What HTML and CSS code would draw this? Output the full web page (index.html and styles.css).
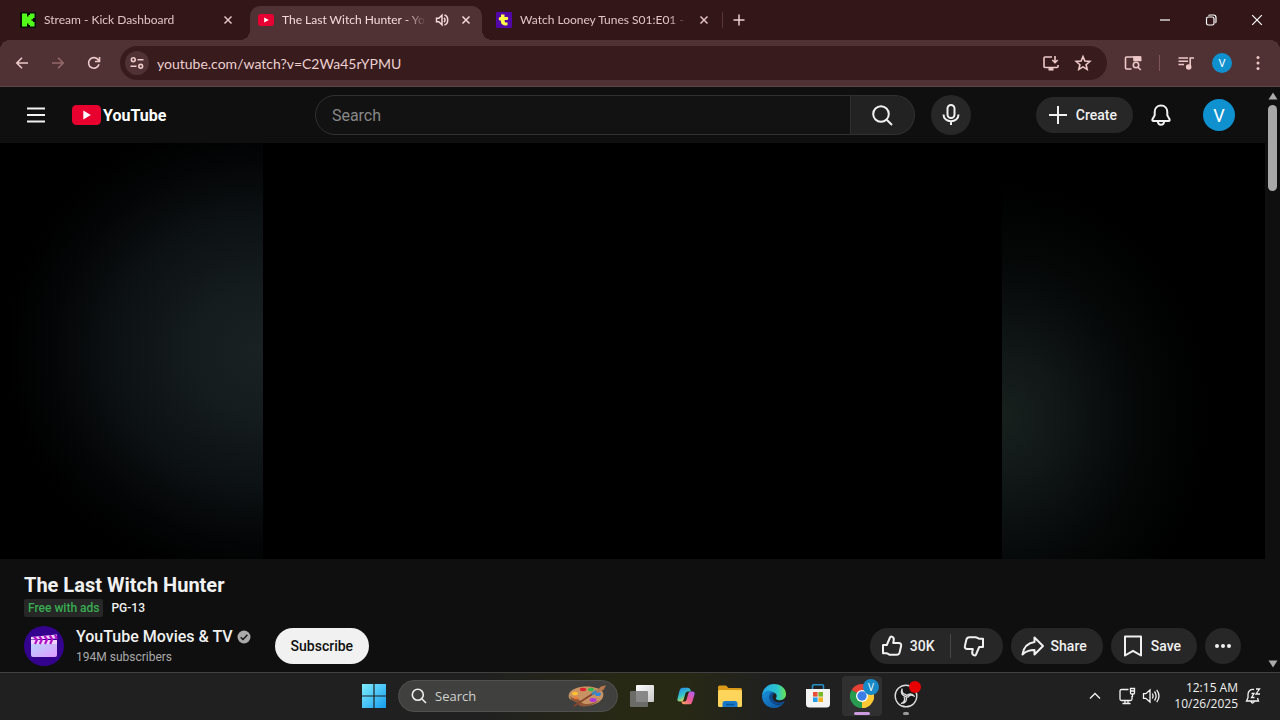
FILE: index.html
```html
<!DOCTYPE html>
<html lang="en">
<head>
<meta charset="utf-8">
<meta name="viewport" content="width=device-width, initial-scale=1">
<title>The Last Witch Hunter - YouTube</title>
<link rel="stylesheet" href="styles.css">
</head>
<body>
<header class="tabstrip">
  <div class="tab">
    <svg class="favicon" viewBox="0 0 16 16"><rect width="16" height="16" fill="#0a0d0a"/><path d="M2 1.500h5v3h1.500V3H10V1.500h4.500v4.500H13v1.200h-1.500v1.600H13V10h1.500v4.500H10V13H8.500v-1.500H7v3H2z" fill="#53fc18"/></svg>
    <span class="tab-title">Stream - Kick Dashboard</span>
    <button class="tab-close" aria-label="Close tab"><svg viewBox="0 0 16 16"><path d="M4.500 4.500l7 7M11.500 4.500l-7 7"/></svg></button>
  </div>
  <div class="tab active">
    <svg class="favicon" viewBox="0 0 16 16"><rect y="2" width="16" height="12" rx="3" fill="#e80033"/><path d="M6.200 5.400v5.200L10.800 8z" fill="#fff"/></svg>
    <span class="tab-title">The Last Witch Hunter - YouTube</span>
    <button class="tab-close" aria-label="Mute tab"><svg viewBox="0 0 16 16"><path d="M2.500 6.200h2.300L8 3.200v9.600L4.800 9.800H2.500zM10 5.800c1.400 1 1.400 3.400 0 4.400M10.500 3c4.300 1.500 4.300 8.500 0 10"/></svg></button>
    <button class="tab-close" aria-label="Close tab"><svg viewBox="0 0 16 16"><path d="M4.500 4.500l7 7M11.500 4.500l-7 7"/></svg></button>
  </div>
  <div class="tab">
    <svg class="favicon" viewBox="0 0 16 16"><rect width="16" height="16" rx="1" fill="#5206a8"/><path d="M5 2.500h3.500V5h1.700a1.500 1.500 0 1 1 1 2.900H8.700v1.500c0 1 1.500 1.300 2.800.8v2.700c-3.300 1.300-6.600.1-6.600-3.300V8.500a1.800 1.800 0 1 1 .1-3.500z" fill="#ffff45"/></svg>
    <span class="tab-title">Watch Looney Tunes S01:E01 - Tubi</span>
    <button class="tab-close" aria-label="Close tab"><svg viewBox="0 0 16 16"><path d="M4.500 4.500l7 7M11.500 4.500l-7 7"/></svg></button>
  </div>
  <span class="tab-divider"></span>
  <button class="new-tab" aria-label="New tab"><svg viewBox="0 0 16 16"><path d="M8 2.500v11M2.500 8h11"/></svg></button>
  <div class="window-controls">
    <button aria-label="Minimize"><svg viewBox="0 0 16 16"><path d="M3 8h10"/></svg></button>
    <button aria-label="Restore"><svg viewBox="0 0 16 16"><rect x="3.500" y="5" width="7.500" height="8" rx="1.800"/><path d="M5.500 3.500Q6 3 7 3h3.500Q13 3 13 5.500V9.500Q13 10.500 12.500 11"/></svg></button>
    <button aria-label="Close window"><svg viewBox="0 0 16 16"><path d="M3.200 3.200l9.600 9.600M12.800 3.200l-9.600 9.600"/></svg></button>
  </div>
</header>

<nav class="toolbar">
  <button class="tool" aria-label="Back"><svg viewBox="0 0 16 16"><path d="M14 8H3M8 2.800L2.800 8 8 13.200"/></svg></button>
  <button class="tool dim" aria-label="Forward"><svg viewBox="0 0 16 16"><path d="M2 8h11M8 2.800L13.200 8 8 13.200"/></svg></button>
  <button class="tool" aria-label="Reload"><svg viewBox="0 0 16 16"><path d="M13 9.300A5.300 5.300 0 1 1 12.300 5L13.500 6.300M13.500 2v4.500H9"/></svg></button>
  <div class="omnibox">
    <button class="site-info" aria-label="Site information"><svg viewBox="0 0 16 16"><circle cx="4.300" cy="4.700" r="1.900"/><path d="M8.500 4.700h6M1.500 11.300h6"/><circle cx="11.700" cy="11.300" r="1.900"/></svg></button>
    <input class="url" type="text" aria-label="Address" value="youtube.com/watch?v=C2Wa45rYPMU">
    <button class="omni-action" aria-label="Install app"><svg viewBox="0 0 18 18"><path d="M10 3H3q-1 0-1 1v8.500q0 1 1 1h12q1 0 1-1V11M13 2v6.500M10.300 6L13 8.700 15.700 6"/><path d="M6.500 15.300h5" class="thick"/></svg></button>
    <button class="omni-action" aria-label="Bookmark"><svg viewBox="0 0 18 18"><path d="M9 2.600l1.900 4.500 4.900.4-3.700 3.200 1.100 4.700L9 12.900l-4.200 2.500 1.100-4.700-3.700-3.200 4.900-.4z"/></svg></button>
  </div>
  <button class="tool" aria-label="Search tabs"><svg viewBox="0 0 18 18"><path d="M7.500 15H2.500q-1 0-1-1V4q0-1 1-1H15.500q1 0 1 1v3"/><path d="M10 3h6.500v3.500H10z" class="solid"/><circle cx="12" cy="11" r="2.700"/><path d="M14 13.200l2.700 2.800"/></svg></button>
  <span class="tool-divider"></span>
  <button class="tool media" aria-label="Media controls"><svg viewBox="0 0 18 18"><path d="M1.500 4h9.500M1.500 7.300h9.500M1.500 10.500h5.500M13.200 13V4h3.800"/><circle cx="11.700" cy="13" r="2" class="solid"/></svg></button>
  <button class="tool" aria-label="Profile"><span class="avatar small">V</span></button>
  <button class="tool" aria-label="Menu"><svg viewBox="0 0 16 16"><g class="dots"><circle cx="8" cy="2.500" r="1.500"/><circle cx="8" cy="8" r="1.500"/><circle cx="8" cy="13.500" r="1.500"/></g></svg></button>
</nav>

<div class="viewport">
  <main class="page">
    <div class="masthead">
      <div class="brand">
        <button class="guide" aria-label="Guide"><svg viewBox="0 0 24 24"><path d="M3 5.500h18M3 12h18M3 18.500h18"/></svg></button>
        <a class="logo" href="#"><svg viewBox="0 0 29 20"><rect width="29" height="20" rx="4.500" fill="#e8002e"/><path d="M11.300 5.500v9L18.800 10z" fill="#fff"/></svg><span>YouTube</span></a>
      </div>
      <form class="search" role="search">
        <input type="text" placeholder="Search" aria-label="Search">
        <button type="button" class="search-go" aria-label="Search"><svg viewBox="0 0 24 24"><circle cx="11" cy="11" r="7.800"/><path d="M16.700 16.700L22 22"/></svg></button>
        <button type="button" class="mic" aria-label="Search with your voice"><svg viewBox="0 0 24 24"><rect x="8.500" y="2" width="7" height="13" rx="3.500"/><path d="M4.500 11.500c0 9 15 9 15 0M12 18.500V22"/></svg></button>
      </form>
      <div class="account">
        <button class="pill create"><svg viewBox="0 0 24 24"><path d="M12 3v18M3 12h18"/></svg>Create</button>
        <button class="bell" aria-label="Notifications"><svg viewBox="0 0 24 24"><path d="M12 2.500c-3.800 0-6.300 2.700-6.300 6.500v3.300L3.500 16.200q-.7 1.600 1 1.800h15q1.700-.2 1-1.800l-2.200-3.900V9c0-3.800-2.500-6.500-6.300-6.500z"/><path d="M8.800 18.500c.5 4.400 5.900 4.400 6.400 0"/></svg></button>
        <button class="avatar large" aria-label="Account">V</button>
      </div>
    </div>

    <section class="player" aria-label="Video player">
      <div class="ambient left"></div>
      <div class="video"></div>
      <div class="ambient right"></div>
    </section>

    <section class="details">
      <h1>The Last Witch Hunter</h1>
      <div class="badges"><span class="free">Free with ads</span><span class="rating">PG-13</span></div>
      <div class="owner-row">
        <svg class="channel-icon" viewBox="0 0 40 40"><defs><linearGradient id="slate" x2="1" y2="1"><stop stop-color="#b8d4ff"/><stop offset="1" stop-color="#df9aff"/></linearGradient></defs><circle cx="20" cy="20" r="20" fill="#34038e"/><path d="M7 17h26v12q0 2-2 2H9q-2 0-2-2z" fill="url(#slate)"/><path d="M7 11l26-2.500v4L7 13.500zM7 14h26v4H7z" fill="#f0d2ff"/><path d="M10 10.700l3 3-2 4.300M15.300 10.300l2.500 3.400-2 4.300M20.500 9.800l2.500 3.700-2 4.500M25.700 9.300l2.500 4-2 4.700M31 9l2 4" fill="none" stroke="#b00fc5" stroke-width="2.200"/></svg>
        <div class="channel">
          <a href="#" class="channel-name">YouTube Movies &amp; TV<svg viewBox="0 0 14 14"><circle cx="7" cy="7" r="6.500" fill="#aaa"/><path d="M3.700 7.200l2.300 2.300 4.400-4.800" fill="none" stroke="#0f0f0f" stroke-width="1.300"/></svg></a>
          <span class="subs">194M subscribers</span>
        </div>
        <button class="subscribe">Subscribe</button>
        <div class="actions">
          <div class="segmented">
            <button class="like"><svg viewBox="0 0 24 24"><path d="M3 11h3.800L10 3.500q.6-1.300 1.800-.9c1.700.6 2.300 2.100 1.900 3.900L13.200 9h5.500c1.900 0 2.900 1.300 2.400 3l-1.500 6.500c-.4 1.500-1.400 2.300-3 2.300H10.500c-1.600 0-2.400-1.500-4-1.500H3z"/></svg>30K</button>
            <button class="dislike" aria-label="Dislike"><svg viewBox="0 0 24 24"><path d="M21 13h-3.800L14 20.500q-.6 1.300-1.800.9c-1.700-.6-2.300-2.100-1.900-3.900l.5-2.500H5.300c-1.900 0-2.900-1.300-2.400-3l1.500-6.500c.4-1.500 1.400-2.300 3-2.300h6.100c1.600 0 2.400 1.500 4 1.500H21z"/></svg></button>
          </div>
          <button class="pill"><svg viewBox="0 0 24 24"><path d="M13.500 3.500L22 12l-8.500 8.500V16c-5 0-8.500 1-12 4.500C2.500 13.500 6.500 9 13.500 8z"/></svg>Share</button>
          <button class="pill"><svg viewBox="0 0 24 24"><path d="M4 2.500h16v19l-8-4.700-8 4.700z"/></svg>Save</button>
          <button class="more" aria-label="More actions"><svg viewBox="0 0 24 24"><g class="dots"><circle cx="6" cy="12" r="2"/><circle cx="12" cy="12" r="2"/><circle cx="18" cy="12" r="2"/></g></svg></button>
        </div>
      </div>
    </section>
  </main>
  <div class="scrollbar" aria-hidden="true">
    <svg viewBox="0 0 10 8"><path d="M5 .5L9.500 7.500H.5z"/></svg>
    <div class="thumb"></div>
    <svg viewBox="0 0 10 8"><path d="M5 7.500L.5.500h9z"/></svg>
  </div>
</div>

<footer class="taskbar">
  <div class="apps">
    <button class="app" aria-label="Start"><svg viewBox="0 0 24 24"><defs><linearGradient id="win" x2="1" y2="1" gradientUnits="userSpaceOnUse" gradientTransform="scale(24)"><stop stop-color="#80edff"/><stop offset="1" stop-color="#159cec"/></linearGradient></defs><path d="M0 0h11.400v11.400H0zM12.600 0H24v11.400H12.600zM0 12.600h11.400V24H0zM12.600 12.600H24V24H12.600z" fill="url(#win)"/></svg></button>
    <label class="task-search">
      <svg class="lens" viewBox="0 0 16 16"><circle cx="6.800" cy="6.800" r="5.500"/><path d="M11 11l4 4"/></svg>
      <input type="text" placeholder="Search">
      <svg class="palette" viewBox="0 0 40 22"><path d="M2 9C5 0 28-1 35 6c4 5-1 12-10 14-6 1.500-12 .7-13-2-.6-2-2-3-5-2.800C2 15 1 12 2 9z" fill="#c99263"/><path d="M3 11c3 4 9 1 11 6 2 3 12 3 18-2-5 6-18 9-21 4-1-3-7-1-8-8z" fill="#8d5738"/><ellipse cx="8" cy="8.500" rx="3" ry="1.800" fill="#ffc22e"/><ellipse cx="16" cy="4.500" rx="3.200" ry="1.700" fill="#dc2430"/><ellipse cx="24" cy="4.500" rx="3" ry="1.800" fill="#35b84d"/><ellipse cx="31" cy="9" rx="3" ry="2" fill="#3087e0"/><ellipse cx="26" cy="15" rx="3.500" ry="1.900" fill="#b235d5"/><ellipse cx="9" cy="13" rx="2.500" ry="1.200" fill="#ee7b32"/><path d="M7 21L27 8" stroke="#85472d" stroke-width="2"/><path d="M25 9l5-3" stroke="#4385b7" stroke-width="3"/><path d="M29 6.500L34 1.500l5-1.300-2.500 4.500-6 3.500z" fill="#b87850"/></svg>
    </label>
    <button class="app" aria-label="Task view"><svg viewBox="0 0 24 24"><defs><linearGradient id="pane" x2="1" y2="1"><stop stop-color="#fff"/><stop offset="1" stop-color="#c7c7c7"/></linearGradient></defs><rect x="6" y="1" width="18" height="17" rx="1" fill="url(#pane)"/><rect y="7" width="18" height="16" rx="1" fill="#777" opacity=".85"/></svg></button>
    <button class="app copilot" aria-label="Copilot"><svg viewBox="0 0 24 24"><defs><linearGradient id="cpa" x2=".5" y2="1"><stop stop-color="#2386ed"/><stop offset=".6" stop-color="#35c6c7"/><stop offset="1" stop-color="#f4d839"/></linearGradient><linearGradient id="cpb" x1="1" x2="0" y2="1"><stop stop-color="#a65eff"/><stop offset=".5" stop-color="#ed5695"/><stop offset="1" stop-color="#ffad58"/></linearGradient></defs><path d="M8 3h6q2 0 2.700 2l.8 2H14q-2 0-2.600 2l-2 7q-.6 2-2.600 2H5q-3 0-2.300-3L5 6q.8-3 3-3z" fill="url(#cpa)"/><path d="M16 21h-6q-2 0-2.700-2l-.5-1H10q2 0 2.600-2l2-7q.6-2 2.600-2H19q3 0 2.300 3L19 18q-.8 3-3 3z" fill="url(#cpb)"/></svg></button>
    <button class="app" aria-label="File Explorer"><svg viewBox="0 0 24 24"><path d="M0 3q0-1.500 1.500-1.500H8L10.500 4H22.500Q24 4 24 5.500V12H0z" fill="#d99a17"/><rect y="6" width="24" height="17" rx="1.500" fill="#ffd45a"/><path d="M4.500 23v-3.500Q4.500 17 7 17h10q2.500 0 2.500 2.500V23z" fill="#1978ca"/><path d="M8 20.500h8" stroke="#07579b" stroke-width="1.500"/></svg></button>
    <button class="app" aria-label="Edge"><svg viewBox="0 0 24 24"><defs><linearGradient id="ea" x2="1"><stop stop-color="#22a5e5"/><stop offset=".65" stop-color="#2cc7cc"/><stop offset="1" stop-color="#6be34c"/></linearGradient><linearGradient id="eb" x2="1" y2="1"><stop stop-color="#1890da"/><stop offset="1" stop-color="#0d529d"/></linearGradient></defs><path d="M0 11.500C.7 4.500 5.700 0 12 0c7 0 12 4.500 12 10 0 4-2.800 6.200-6 6.200-3.500 0-4.500-1.300-3.800-2.500 1.200-2 .3-4.700-3.200-5.500C6.500 7.200 2.500 9 0 11.500z" fill="url(#ea)"/><path d="M0 12c1.500-5 7-6.500 11-3.800C6.500 9.500 6.200 17 12.500 20c4 1.800 7.200.7 9.500-1.500-2 3.500-5.500 5.500-10 5.500C5 24 0 18.500 0 12z" fill="url(#eb)"/><path d="M11 8.200c-5 1.500-5.500 8.300.8 11.500 4 2 8.500 1.200 10.900-1.500-.2-.7-.7-1-1.700-.5-5.500 2-10.500-.5-10.500-5 0-1.800 1.300-2.700 2.500-3.500z" fill="#0c4d91"/></svg></button>
    <button class="app" aria-label="Microsoft Store"><svg viewBox="0 0 24 24"><path d="M6.500 5V2Q6.500.8 8 .8h8q1.500 0 1.500 1.200v3" fill="none" stroke="#2690c8" stroke-width="1.600"/><path d="M0 5h24v15q0 3.500-3.500 3.500h-17Q0 23.500 0 20z" fill="#f3f3f3"/><path d="M7 8h4.600v4.600H7z" fill="#e64f38"/><path d="M12.400 8H17v4.600h-4.600z" fill="#78b824"/><path d="M7 13.400h4.600V18H7z" fill="#249ee8"/><path d="M12.400 13.400H17V18h-4.600z" fill="#f4ae21"/></svg></button>
    <button class="app running current" aria-label="Chrome"><svg viewBox="0 0 24 24"><path d="M12 12L1.600 6A12 12 0 0 1 22.400 6z" fill="#e64134"/><path d="M12 12L22.400 6A12 12 0 0 1 12 24z" fill="#fcc934"/><path d="M12 12v12A12 12 0 0 1 1.600 6z" fill="#279c51"/><path d="M12 6h10.400a12 12 0 0 1-10.400 18l5.200-9z" fill="#fcc934"/><circle cx="12" cy="12" r="6" fill="#fff"/><circle cx="12" cy="12" r="4.700" fill="#3c7ee8"/></svg><span class="app-badge">V</span></button>
    <button class="app running" aria-label="OBS Studio"><svg viewBox="0 0 24 24"><circle cx="12" cy="12" r="10.800" fill="#171718" stroke="#ddd" stroke-width="1.400"/><path d="M12 12.500C8 12 6.500 8.500 8 5c-.2 4 1 5.200 4.500 5.700M12 12.500c2.400-3.300 6.200-3.300 8.400-.2-3.400-2-5.400-1.300-7 1.500M12 12.500c1.600 3.700-.6 6.800-4.500 6.900 3.500-1.800 4-3.600 2.500-6.700" fill="#171718" stroke="#ddd" stroke-width="1.300" stroke-linejoin="round"/></svg><span class="app-badge recording"></span></button>
  </div>
  <div class="tray">
    <button aria-label="Show hidden icons"><svg viewBox="0 0 18 18"><path d="M4 11.500l5-5 5 5"/></svg></button>
    <button class="quick" aria-label="Network and sound"><svg viewBox="0 0 18 18"><path d="M10.500 2.500H3.500q-1.500 0-1.500 1.500v8q0 1.500 1.500 1.500h9q1.500 0 1.500-1.500V9M4.500 16.500h8M7 13.500v3M10 13.500v3"/><path d="M12.500 1.500h4v4.500q0 1-1 1h-2q-1 0-1-1zM13 4h3M14.500 7v3"/></svg><svg viewBox="0 0 18 18"><path d="M1.500 6.700h2.300L8 3v12l-4.200-3.700H1.500zM10.300 6.500q1.500 2.500 0 5M12.500 4.500q3.300 4.500 0 9M14.700 2.800q4.600 6.200 0 12.400"/></svg></button>
    <button class="clock"><span>12:15 AM</span><span>10/26/2025</span></button>
    <button aria-label="Notifications"><svg viewBox="0 0 18 18"><path d="M10 2.500C6 2 4 4.500 4 7.500v3L2.500 14h12L13.500 11M7 14.500q1.500 3 3.500 0M7.500 6.500H10l-2.500 4h3M12 2h3.500L12 7h4"/></svg></button>
  </div>
</footer>
</body>
</html>
```
FILE: styles.css
```css
* {
  box-sizing: border-box;
}

body {
  margin: 0;
  height: 100vh;
  display: flex;
  flex-direction: column;
  overflow: hidden;
  background: #0f0f0f;
  color: #f1f1f1;
  font-family: Roboto, "Liberation Sans", sans-serif;
}

button,
input {
  margin: 0;
  padding: 0;
  border: 0;
  background: none;
  color: inherit;
  font: inherit;
  min-width: 0;
}

button {
  display: flex;
  align-items: center;
  justify-content: center;
  flex: none;
  white-space: nowrap;
}

a {
  color: inherit;
  text-decoration: none;
}

svg {
  display: block;
  flex: none;
  fill: none;
}

/* Tab strip */
.tabstrip {
  flex: none;
  height: 40px;
  padding-left: 12px;
  display: flex;
  align-items: center;
  background: #321618;
  color: #e3c3c3;
  font-size: 12px;
}

.tabstrip svg {
  width: 16px;
  height: 16px;
}

.tabstrip button svg {
  stroke: currentColor;
  stroke-width: 1.5;
}

.tab {
  flex: 0 1 232px;
  min-width: 0;
  height: 34px;
  margin: 6px 6px 0 0;
  padding: 0 8px 6px;
  display: flex;
  align-items: center;
  gap: 8px;
}

.tab.active {
  position: relative;
  border-radius: 10px 10px 0 0;
  background: #503234;
  color: #f5dada;
}

.tab.active::before,
.tab.active::after {
  content: "";
  position: absolute;
  bottom: 0;
  width: 10px;
  height: 10px;
}

.tab.active::before {
  right: 100%;
  background: radial-gradient(circle at 0 0, transparent 10px, #503234 10px);
}

.tab.active::after {
  left: 100%;
  background: radial-gradient(circle at 100% 0, transparent 10px, #503234 10px);
}

.tab-title {
  flex: 1;
  min-width: 0;
  overflow: hidden;
  white-space: nowrap;
  font-family: Lato, "Open Sans", sans-serif;
  font-size: 12px;
  line-height: 18px;
  mask-image: linear-gradient(to left, transparent, #000 20px);
}

.tab-divider {
  width: 1px;
  height: 16px;
  margin: 0 8px 0 -4px;
  background: #5c3537;
}

.new-tab {
  color: #f0d0d0;
}

.window-controls {
  display: flex;
  margin-left: auto;
  color: #fff;
}

.window-controls button {
  width: 46px;
  height: 40px;
}

.window-controls button svg {
  stroke-width: 1.2;
}

/* Browser toolbar */
.toolbar {
  flex: none;
  height: 47px;
  padding: 0 4px;
  display: flex;
  align-items: center;
  border-bottom: 1px solid #5b4546;
  background: linear-gradient(#503234, #503234) 0 10px no-repeat, radial-gradient(circle at 10px 10px, #503234 10px, #321618 10px) 0 0 / 10px 10px no-repeat, radial-gradient(circle at 0 10px, #503234 10px, #321618 10px) 100% 0 / 10px 10px no-repeat, #503234;
  color: #edc9c9;
}

.tool {
  width: 36px;
  height: 36px;
}

.tool svg,
.omnibox svg {
  width: 16px;
  height: 16px;
  stroke: currentColor;
  stroke-width: 1.6;
}

.tool.dim {
  color: #94696b;
}

.toolbar .omni-action svg,
.omnibox + .tool svg,
.tool.media svg {
  width: 18px;
  height: 18px;
}

.toolbar .thick {
  stroke-width: 2.5;
}

.toolbar .solid {
  fill: currentColor;
}

.dots {
  fill: currentColor;
  stroke: none;
}

.omnibox {
  flex: 1;
  min-width: 0;
  height: 34px;
  margin: 0 8px;
  padding: 0 8px 0 5px;
  display: flex;
  align-items: center;
  border-radius: 17px;
  background: #381b1d;
}

.site-info {
  width: 24px;
  height: 24px;
  border-radius: 50%;
  background: #503234;
}

.url {
  flex: 1;
  margin-left: 8px;
  color: #ecd0d0;
  font-family: Lato, "Open Sans", sans-serif;
  font-size: 14px;
}

.omni-action {
  width: 32px;
  height: 32px;
}

.tool-divider {
  width: 1px;
  height: 16px;
  margin: 0 8px;
  background: #7b5759;
}

.avatar {
  display: flex;
  align-items: center;
  justify-content: center;
  border-radius: 50%;
  background: #0f90cf;
  color: #fff;
}

.avatar.small {
  width: 20px;
  height: 20px;
  font-size: 11px;
}

.avatar.large {
  width: 32px;
  height: 32px;
  font-size: 18px;
}

/* Page */
.viewport {
  flex: 1;
  min-height: 0;
  display: flex;
}

.page {
  flex: 1;
  min-width: 0;
  display: flex;
  flex-direction: column;
}

.page button svg {
  width: 24px;
  height: 24px;
  stroke: currentColor;
  stroke-width: 2;
  stroke-linejoin: round;
}

.masthead {
  flex: none;
  height: 56px;
  padding: 0 30px 0 16px;
  display: flex;
  align-items: center;
  justify-content: space-between;
}

.brand {
  width: 234px;
  display: flex;
  align-items: center;
}

.guide {
  width: 40px;
  height: 40px;
}

.logo {
  margin-left: 16px;
  display: flex;
  align-items: center;
  gap: 2px;
  color: #fff;
  font-size: 16px;
  font-weight: 700;
}

.logo svg {
  width: 29px;
  height: 20px;
}

.search {
  flex: 0 1 656px;
  min-width: 0;
  display: flex;
}

.search input {
  flex: 1;
  height: 40px;
  padding: 0 16px;
  border: 1px solid #303030;
  border-radius: 20px 0 0 20px;
  background: #121212;
  font-size: 16px;
}

.search input::placeholder {
  color: #888;
}

.search-go {
  width: 64px;
  height: 40px;
  border: 1px solid #303030;
  border-left: 0;
  border-radius: 0 20px 20px 0;
  background: #222;
}

.mic {
  width: 40px;
  height: 40px;
  margin-left: 16px;
  border-radius: 50%;
  background: #272727;
}

.account {
  display: flex;
  align-items: center;
}

.pill {
  height: 36px;
  padding: 0 16px 0 10px;
  gap: 6px;
  border-radius: 18px;
  background: #272727;
  font-size: 14px;
  font-weight: 500;
}

.bell {
  width: 40px;
  height: 40px;
  margin: 0 22px 0 8px;
}

.player {
  flex: 1;
  min-height: 0;
  display: flex;
  background: #000;
}

.video {
  height: 100%;
  aspect-ratio: 16 / 9;
}

.ambient {
  flex: 1;
}

.ambient.left {
  background: radial-gradient(ellipse 98% 56% at 100% 50%, #192122 0%, #151c1e 28%, #0c1113 58%, #040506 82%, #000 100%);
}

.ambient.right {
  background: radial-gradient(ellipse 78% 56% at 0 66%, #18201e 0%, #101716 28%, #070a0a 60%, #030404 80%, #000 100%);
}

.details {
  flex: none;
  padding: 14px 24px 6px;
}

h1 {
  margin: 0;
  font-size: 20px;
  line-height: 24px;
  font-weight: 700;
}

.badges {
  margin: 2px 0 9px;
  display: flex;
  gap: 8px;
  font-size: 12px;
  line-height: 18px;
  font-weight: 500;
}

.free {
  padding: 0 4px;
  border-radius: 2px;
  background: #272727;
  color: #38ad51;
}

.owner-row {
  display: flex;
  align-items: center;
}

.channel-icon {
  width: 40px;
  height: 40px;
}

.channel {
  margin: 0 24px 0 12px;
  display: flex;
  flex-direction: column;
  white-space: nowrap;
}

.channel-name {
  display: flex;
  align-items: center;
  gap: 4px;
  font-size: 16px;
  line-height: 22px;
  font-weight: 500;
}

.channel-name svg {
  width: 14px;
  height: 14px;
}

.subs {
  color: #aaa;
  font-size: 12px;
  line-height: 18px;
}

.subscribe {
  height: 36px;
  padding: 0 16px;
  border-radius: 18px;
  background: #f1f1f1;
  color: #0f0f0f;
  font-size: 14px;
  font-weight: 500;
}

.actions {
  margin-left: auto;
  display: flex;
  gap: 8px;
}

.segmented {
  display: flex;
  align-items: center;
  height: 36px;
  border-radius: 18px;
  background: #272727;
  font-size: 14px;
  font-weight: 500;
}

.like {
  height: 24px;
  gap: 6px;
  padding: 0 15px 0 10px;
  border-right: 1px solid #474747;
}

.dislike {
  width: 52px;
  padding-right: 6px;
}

.more {
  width: 36px;
  height: 36px;
  border-radius: 50%;
  background: #272727;
}

.scrollbar {
  flex: none;
  width: 15px;
  padding: 5px 0 4px;
  display: flex;
  flex-direction: column;
  align-items: center;
  gap: 5px;
}

.scrollbar svg {
  width: 10px;
  height: 8px;
  fill: #aaa;
}

.scrollbar svg:last-child {
  margin-top: auto;
}

.thumb {
  width: 9px;
  height: 15%;
  border-radius: 5px;
  background: #a7a7a7;
}

/* Taskbar */
.taskbar {
  flex: none;
  height: 48px;
  padding-bottom: 2px;
  display: grid;
  grid-template-columns: 1fr auto 1fr;
  align-items: center;
  border-top: 1px solid #414141;
  background: linear-gradient(to right, transparent 38%, #282914 49%, #282914 53%, transparent 60%), #202020;
  font-family: "Open Sans", "Noto Sans", sans-serif;
}

.apps {
  grid-column: 2;
  display: flex;
  align-items: center;
  gap: 4px;
}

.app {
  position: relative;
  width: 40px;
  height: 40px;
  border-radius: 4px;
}

.app svg {
  width: 24px;
  height: 24px;
}

.copilot svg {
  width: 22px;
  height: 22px;
}

.app.current {
  background: #303030;
}

.app.running::after {
  content: "";
  position: absolute;
  bottom: 1px;
  width: 6px;
  height: 3px;
  border-radius: 2px;
  background: #999;
}

.app.current::after {
  width: 16px;
  background: #cb9bdd;
}

.app-badge {
  position: absolute;
  top: 3px;
  right: 3px;
  width: 16px;
  height: 16px;
  border-radius: 50%;
  background: #1689c6;
  color: #fff;
  font-size: 10px;
  line-height: 16px;
}

.app-badge.recording {
  top: 5px;
  right: 5px;
  width: 12px;
  height: 12px;
  background: #e80000;
}

.task-search {
  width: 220px;
  height: 32px;
  padding: 0 10px 0 12px;
  display: flex;
  align-items: center;
  border: 1px solid #50504d;
  border-radius: 16px;
  background: #40403e;
}

.task-search input {
  flex: 1;
  margin-left: 8px;
  font-size: 13px;
}

.task-search input::placeholder {
  color: #d0d0d0;
}

.lens {
  width: 16px;
  height: 16px;
  stroke: #eee;
  stroke-width: 1.6;
}

.palette {
  width: 40px;
  height: 22px;
}

.tray {
  grid-column: 3;
  justify-self: end;
  padding-right: 18px;
  display: flex;
  align-items: center;
  gap: 6px;
}

.tray svg {
  width: 18px;
  height: 18px;
  stroke: #f4f4f4;
  stroke-width: 1.3;
}

.quick {
  gap: 6px;
  padding: 0 8px;
}

.clock {
  flex-direction: column;
  align-items: flex-end;
  font-size: 12px;
  line-height: 16px;
}
```
